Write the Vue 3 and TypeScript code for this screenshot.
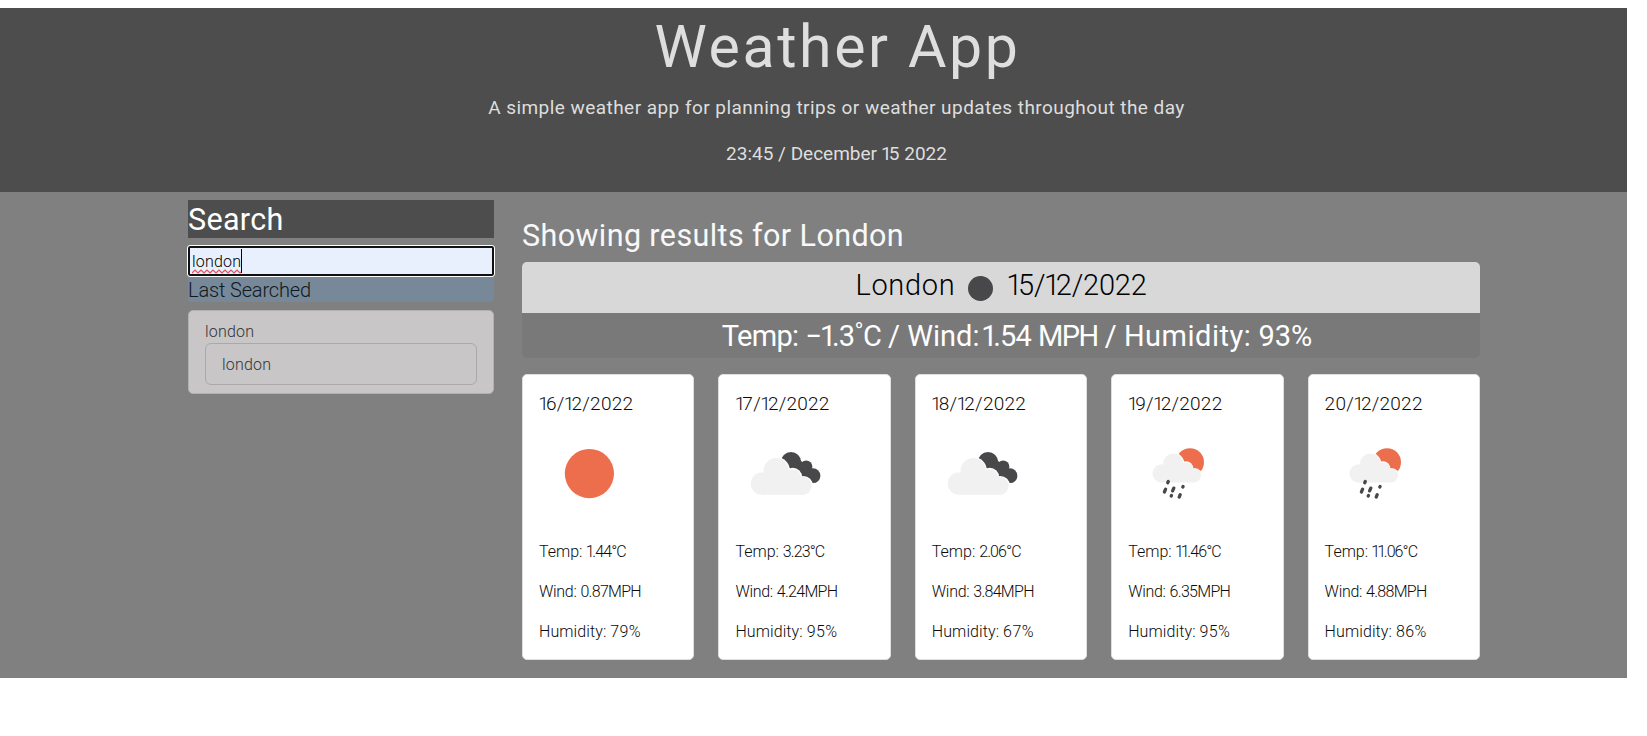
<script setup lang="ts">
import { h, type FunctionalComponent } from 'vue'

type Icon = 'sun' | 'clouds' | 'shower'

interface Day {
  date: string
  icon: Icon
  temp: string
  wind: string
  humidity: number
}

const city = 'London'
const query = 'london'
const days: Day[] = [
  { date: '16/12/2022', icon: 'sun', temp: '1.44', wind: '0.87', humidity: 79 },
  { date: '17/12/2022', icon: 'clouds', temp: '3.23', wind: '4.24', humidity: 95 },
  { date: '18/12/2022', icon: 'clouds', temp: '2.06', wind: '3.84', humidity: 67 },
  { date: '19/12/2022', icon: 'shower', temp: '11.46', wind: '6.35', humidity: 95 },
  { date: '20/12/2022', icon: 'shower', temp: '11.06', wind: '4.88', humidity: 86 },
]

// Sets figures proportionally: every "1" is pulled in so it takes less room than other digits.
const Figures: FunctionalComponent<{ text: string }> = (props) =>
  h(
    'span',
    props.text.split(/(1)/).filter(Boolean).map((part) => (part === '1' ? h('span', { class: 'one' }, part) : part)),
  )
Figures.props = ['text']
</script>

<template>
  <div class="page">
    <header class="hero">
      <h1>Weather App</h1>
      <p class="lead">A simple weather app for planning trips or weather updates throughout the day</p>
      <p class="clock"><Figures text="23:45 / December 15 2022" /></p>
    </header>

    <div class="content">
      <aside class="sidebar">
        <h2 class="search-title">Search</h2>
        <div class="search-box">
          <span class="typed">{{ query }}
            <svg class="squiggle" width="50" height="5" viewBox="0 0 50 5">
              <path d="M0 4L3 1L6 4L9 1L12 4L15 1L18 4L21 1L24 4L27 1L30 4L33 1L36 4L39 1L42 4L45 1L48 4L49 3" />
            </svg>
          </span>
          <span class="caret"></span>
        </div>
        <h3 class="last-title"><span>Last Searched</span></h3>
        <div class="history">
          <span class="entry">{{ query }}</span>
          <div class="history-item"><span class="entry">{{ query }}</span></div>
        </div>
      </aside>

      <main class="results">
        <h2 class="results-title">Showing results for {{ city }}</h2>
        <section class="today">
          <div class="today-head">
            <span class="today-city">{{ city }}</span>
            <svg class="today-icon" width="50" height="50" viewBox="0 0 100 100">
              <circle cx="51" cy="51" r="25" fill="#48484a" />
            </svg>
            <span class="today-date"><Figures text="15/12/2022" /></span>
          </div>
          <div class="today-body">
            <span class="name-temp">Temp:</span> <Figures class="reading" text="−1.3˚C" /> / <span>Wind:</span>
            <Figures class="reading speed" text="1.54" /> <span class="unit">MPH</span> /
            <span class="name-hum">Humidity:</span> 93%
          </div>
        </section>

        <section class="forecast">
          <article v-for="day in days" :key="day.date" class="card">
            <h5><Figures :text="day.date" /></h5>
            <svg class="icon" width="100" height="100" viewBox="0 0 100 100">
              <circle v-if="day.icon === 'sun'" cx="50.4" cy="49.6" r="24.6" fill="#ec6e4c" />
              <g v-else-if="day.icon === 'clouds'" transform="translate(1.2 .2)">
                <g fill="#48484a">
                  <circle cx="54.8" cy="38" r="10.2" />
                  <circle cx="70" cy="42.5" r="6.2" />
                  <circle cx="76.8" cy="51.5" r="7.4" />
                  <path d="M50 40L62 34L79 50L74 59L62 56Z" />
                </g>
                <g fill="#fff">
                  <circle cx="40" cy="46.5" r="13.7" />
                  <circle cx="56.5" cy="53" r="9.4" />
                  <circle cx="67" cy="61.5" r="9.8" />
                </g>
                <g fill="#f1f1f1">
                  <circle cx="40" cy="46.5" r="12.6" />
                  <circle cx="56.5" cy="53.5" r="8.4" />
                  <circle cx="25.8" cy="59.4" r="11.2" />
                  <circle cx="66.5" cy="61.6" r="9" />
                  <path d="M26 49L48 44L64 54L67 70.6H26Z" />
                </g>
              </g>
              <g v-else transform="translate(-.5 .2)">
                <circle cx="62.5" cy="38" r="14" fill="#ec6e4c" />
                <g fill="#fff">
                  <circle cx="45.8" cy="39.5" r="11" />
                  <circle cx="58.5" cy="44.5" r="7.4" />
                  <circle cx="67" cy="52" r="8" />
                </g>
                <g fill="#f1f1f1">
                  <circle cx="45.8" cy="39.5" r="10.2" />
                  <circle cx="59" cy="45" r="6.7" />
                  <circle cx="34.2" cy="49.2" r="9.2" />
                  <circle cx="66.2" cy="51.2" r="7.2" />
                  <path d="M34 41L52 36L64 46L66 58.4H34Z" />
                </g>
                <g stroke="#48484a" stroke-width="3.3" stroke-linecap="round">
                  <path d="M40.8 57.3L40.2 58.6M38.1 65L36.9 67.8M46.3 63.9L45.1 66.7M55.6 62.2L55.3 62.8M44 71.3L43.7 71.9M52.7 70.5L51.7 72.9" />
                </g>
              </g>
            </svg>
            <p><span>Temp:</span> <Figures class="reading" :text="day.temp + '°C'" /></p>
            <p><span class="name-wind">Wind:</span> <Figures class="reading wind" :text="day.wind + 'MPH'" /></p>
            <p><span class="name-hum">Humidity:</span> <span class="percent">{{ day.humidity }}%</span></p>
          </article>
        </section>
      </main>
    </div>
  </div>
</template>

<style>
body {
  margin: 0;
  background: #fff;
}
</style>

<style scoped>
.page {
  width: 1627px;
  padding-top: 8px;
  font-family: Roboto, 'Open Sans', sans-serif;
  font-size: 16px;
  color: #000;
}

h1, h2, h3, h5, p {
  margin: 0;
  font-weight: 400;
  white-space: nowrap;
}

.page :deep(.one) {
  margin-left: -0.04em;
  letter-spacing: -0.15em;
}

.hero {
  box-sizing: border-box;
  height: 184px;
  padding: 4px 0 0 46px;
  background: #4d4d4d;
  color: #dedede;
  text-align: center;
}

.hero h1 {
  padding-left: 2px;
  font-size: 59px;
  line-height: 70px;
  letter-spacing: 2.6px;
}

.hero p {
  font-size: 19px;
  line-height: 29px;
}

.hero .lead {
  margin-top: 11px;
  letter-spacing: 0.45px;
}

.hero .clock {
  margin-top: 17px;
}

.content {
  box-sizing: border-box;
  display: flex;
  gap: 28px;
  height: 486px;
  padding-left: 188px;
  background: #808080;
}

.sidebar {
  width: 306px;
  padding-top: 8px;
}

.search-title {
  height: 38px;
  background: #4d4d4d;
  color: #fff;
  font-size: 30.5px;
  line-height: 39px;
  letter-spacing: 0.3px;
}

.search-box {
  box-sizing: border-box;
  display: flex;
  align-items: center;
  height: 30px;
  margin-top: 8px;
  padding: 0 2px;
  border: 2px solid #101010;
  border-radius: 2px;
  outline: 1px solid #fff;
  background: #e8f0fe;
}

.typed {
  position: relative;
  height: 24px;
  line-height: 25px;
  font-weight: 300;
  letter-spacing: 0.2px;
}

.squiggle {
  position: absolute;
  left: 0;
  bottom: -1px;
  fill: none;
  stroke: #e0525c;
  stroke-width: 1.2;
}

.caret {
  width: 1px;
  height: 24px;
  background: #000;
}

.last-title {
  height: 25px;
  margin-top: 1px;
  border-radius: 0 0 4px 4px;
  background: #778899;
  color: #101820;
  font-size: 20px;
  font-weight: 300;
  line-height: 26px;
  letter-spacing: -0.15px;
}

.history {
  box-sizing: border-box;
  height: 84px;
  margin-top: 8px;
  padding: 9px 16px 0;
  border: 1px solid #b2b1b1;
  border-radius: 5px;
  background: #c8c6c6;
  color: #333;
  font-weight: 300;
  line-height: 24px;
  letter-spacing: 0.2px;
}

.history-item {
  box-sizing: border-box;
  height: 42px;
  margin-top: -1px;
  padding: 9px 16px;
  border: 1px solid #aaa8a8;
  border-radius: 6px;
}

.results {
  width: 958px;
  padding-top: 26px;
}

.results-title {
  color: #f8f8f8;
  font-size: 30.5px;
  line-height: 36px;
  letter-spacing: 0.4px;
}

.today {
  margin-top: 8px;
  overflow: hidden;
  border-radius: 5px;
  font-size: 29px;
}

.today-head {
  display: flex;
  align-items: center;
  justify-content: center;
  height: 51px;
  background: #d8d8d8;
  font-weight: 300;
}

.today-city,
.today-date {
  height: 51px;
  line-height: 47px;
}

.today-city {
  letter-spacing: 0.7px;
}

.today-date {
  margin-left: 2px;
  letter-spacing: -0.2px;
}

.today-body {
  height: 45px;
  padding-left: 32px;
  background: #797979;
  color: #fff;
  line-height: 47px;
  text-align: center;
  white-space: nowrap;
}

.today-body .name-temp {
  letter-spacing: -0.7px;
}

.today-body .name-hum {
  letter-spacing: 0.5px;
}

.today-body .reading {
  letter-spacing: -0.9px;
}

.today-body .speed {
  margin-left: 3px;
}

.today-body .unit {
  letter-spacing: -1.6px;
}

.forecast {
  display: grid;
  grid-template-columns: repeat(5, 1fr);
  gap: 24px;
  margin-top: 16px;
}

.card {
  box-sizing: border-box;
  height: 286px;
  padding: 16px;
  border: 1px solid #dfdfdf;
  border-radius: 5px;
  background: #fff;
  color: #0c0c0c;
}

.card h5 {
  font-size: 19px;
  font-weight: 300;
  line-height: 26px;
  letter-spacing: 0.25px;
}

.icon {
  display: block;
  margin: 7px 0 16px;
}

.card p {
  margin-bottom: 16px;
  font-weight: 300;
  line-height: 24px;
}

.card .reading {
  letter-spacing: -0.9px;
}

.card .wind {
  letter-spacing: -0.7px;
}

.card .name-wind {
  letter-spacing: -0.3px;
}

.card .name-hum {
  letter-spacing: 0.1px;
}

.card .percent {
  letter-spacing: 0.4px;
}
</style>
